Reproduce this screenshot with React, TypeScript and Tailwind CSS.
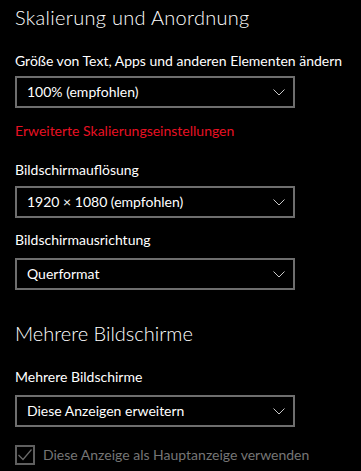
import React from "react";

function Chevron() {
  return (
    <svg width="12" height="7" viewBox="0 0 12 7" fill="none" className="shrink-0">
      <polyline points="0.5,0.5 6,6 11.5,0.5" stroke="#c8c8c8" strokeWidth="1" />
    </svg>
  );
}

function Select({ value, className }: { value: string; className?: string }) {
  return (
    <div
      className={
        "w-[280px] h-[32px] border-2 border-[#6e6e6e] flex items-center justify-between pl-[10px] pr-[8px] " +
        (className ?? "")
      }
    >
      <span className="text-[14px] leading-[20px] text-white whitespace-nowrap">{value}</span>
      <Chevron />
    </div>
  );
}

export default function App() {
  return (
    <div className="w-[361px] h-[471px] bg-black text-white pl-[15px] overflow-hidden whitespace-nowrap font-['Lato','Roboto',sans-serif]">
      <div className="pt-[3px] text-[20px] leading-[28px] tracking-[0.3px] font-light text-white">
        Skalierung und Anordnung
      </div>
      <div className="mt-[20px] text-[14px] leading-[20px]">
        Größe von Text, Apps und anderen Elementen ändern
      </div>
      <Select value="100% (empfohlen)" className="mt-[5px]" />
      <div className="mt-[13px] text-[14px] leading-[20px] text-[#e81123]">
        Erweiterte Skalierungseinstellungen
      </div>
      <div className="mt-[19px] text-[14px] leading-[20px]">Bildschirmauflösung</div>
      <Select value="1920 × 1080 (empfohlen)" className="mt-[6px]" />
      <div className="mt-[12px] text-[14px] leading-[20px]">Bildschirmausrichtung</div>
      <Select value="Querformat" className="mt-[8px]" />
      <div className="mt-[29px] text-[20px] leading-[28px] font-light">Mehrere Bildschirme</div>
      <div className="mt-[20px] text-[14px] leading-[20px]">Mehrere Bildschirme</div>
      <Select value="Diese Anzeigen erweitern" className="mt-[8px]" />
      <div className="mt-[18px] flex items-center gap-[8px]">
        <div className="w-[20px] h-[20px] border-2 border-[#5f5f5f] flex items-center justify-center shrink-0">
          <svg width="16" height="16" viewBox="0 0 16 16" fill="none">
            <polyline points="1.5,8 6,12.5 14.5,2.5" stroke="#6a6a6a" strokeWidth="1.2" />
          </svg>
        </div>
        <span className="text-[14px] leading-[20px] text-[#767676]">
          Diese Anzeige als Hauptanzeige verwenden
        </span>
      </div>
    </div>
  );
}
